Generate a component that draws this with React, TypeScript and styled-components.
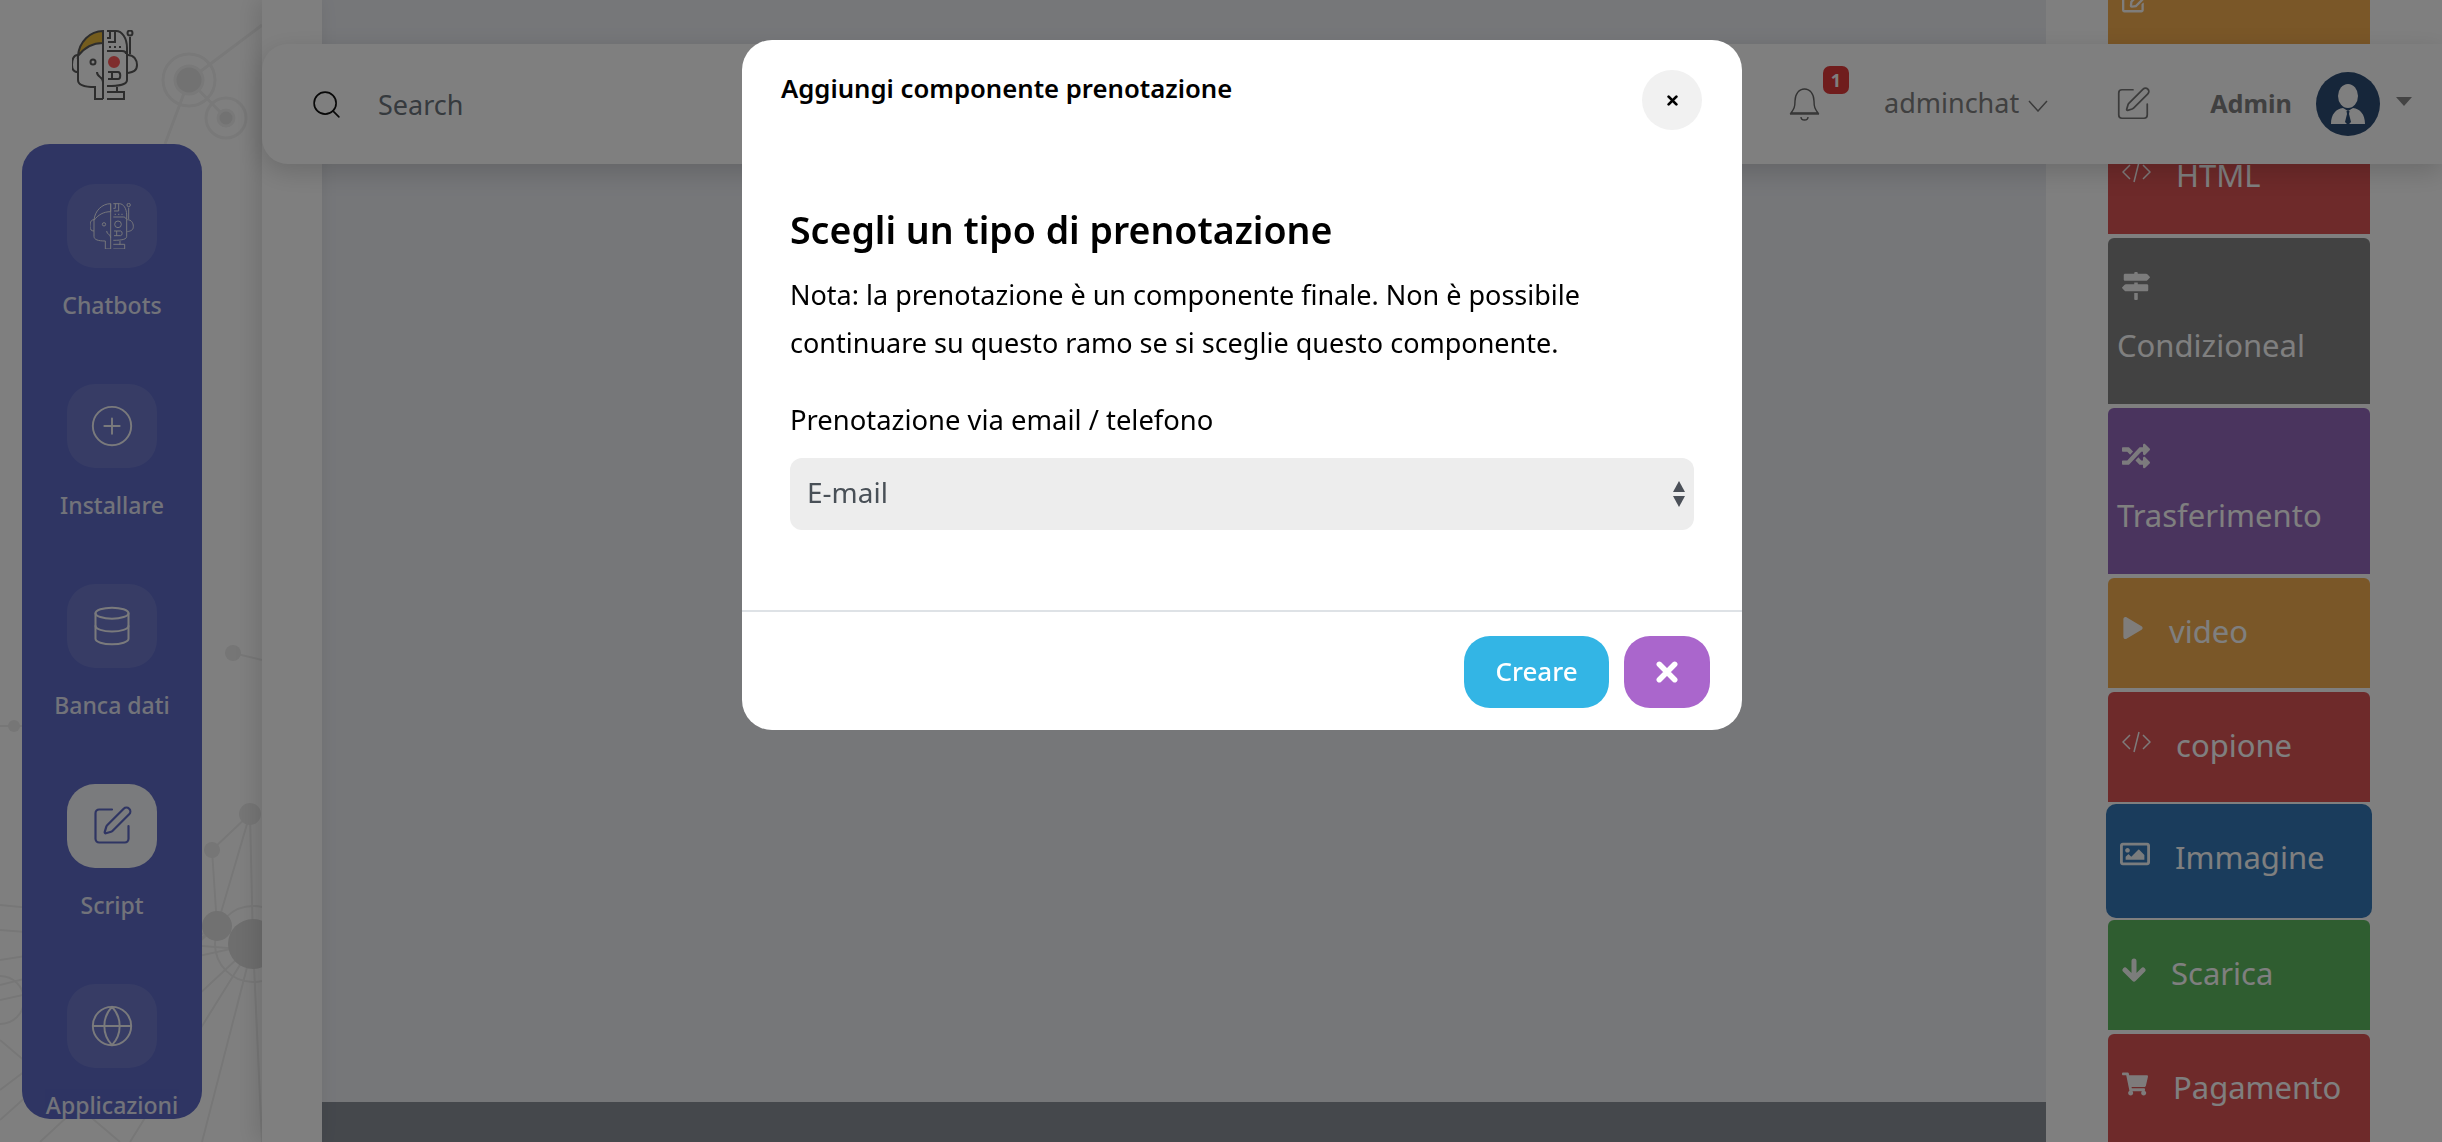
import React from 'react';
import styled, {createGlobalStyle} from 'styled-components';
import {Search, CirclePlus, Database, SquarePen, Globe} from 'lucide-react';
import {FaMapSigns, FaPlay, FaRandom, FaRegImage, FaShoppingCart, FaRegEdit} from 'react-icons/fa';

const GlobalStyle = createGlobalStyle`
  html, body {
    margin: 0;
    padding: 0;
    height: 100%;
    background: #fff;
    font-family: "Noto Sans", "Open Sans", sans-serif;
  }
  * {
    box-sizing: border-box;
  }
`

const BotLogo = ({mono, width}: {mono?: boolean; width: number}) => {
    const line = mono ? '#f4f4f8' : '#5a5a5a'
    return (
        <svg width={width} viewBox="0 0 66 70" fill="none" stroke={line} strokeWidth={mono ? 1.4 : 2}>
            {!mono && <path d="M6 26C7 12 18 1 31 1V13C20 13 12 18 6 26Z" fill="#e8b83a" />}
            {mono && <path d="M6 26C7 12 18 1 31 1V13C20 13 12 18 6 26Z" />}
            <path d="M6 26V50C6 55 12 57 23 57V69H31M31 1V69" />
            <circle cx="21" cy="32" r="2.5" />
            <path d="M25 42C25 48 31 46 31 52" />
            <path d="M6 25C1 25 0 30 0 35C0 40 2 42 6 42" />
            <path d="M35 1H44C50 1 55 8 55 18V50C55 54 50 56 35 56" />
            <path d="M38 1V8H35M43 1V12H36" />
            <path d="M37 17H39M42 17H44M47 17H49" />
            <path d="M35 21H50C52 21 54 22 54 24" />
            <circle cx="42" cy="32" r="5" fill={mono ? 'none' : '#ff5a5a'} stroke={mono ? line : '#ff5a5a'} />
            <path d="M36 42H46C49 42 49 49 46 49H36M40 42V49" />
            <path d="M45 57V62H35M35 69H52V62H44" />
            <circle cx="58" cy="3" r="2.5" />
            <path d="M58 7V24" />
            <path d="M56 25C62 25 65 30 65 35C65 41 61 42 56 43" />
        </svg>
    )
}

const NetworkArt = () => (
    <NetworkSvg viewBox="0 0 262 1142" fill="none" stroke="#f2f2f2" strokeWidth={3}>
        <path d="M262 25L189 80L165 144M189 80L226 118" />
        <circle cx="189" cy="80" r="26" />
        <circle cx="189" cy="80" r="14" fill="#e4e4e4" />
        <circle cx="226" cy="118" r="20" />
        <circle cx="226" cy="118" r="8" fill="#e4e4e4" />
        <g stroke="#efefef" strokeWidth={2}>
            <path d="M250 814L217 926L212 850L250 814M250 814L253 944M217 926L253 944M0 905L217 926L0 960M0 1000L253 944L130 1142M253 944L262 1142M0 1090L217 926M0 1040L120 1142M233 653L262 660M0 726L22 726" />
            <path d="M0 930L253 950M0 985L217 930M40 1142L253 944M0 1120L217 926M202 1142L253 944" />
            <circle cx="253" cy="944" r="38" />
            <circle cx="0" cy="1000" r="24" />
        </g>
        <g fill="#ececec" stroke="none">
            <circle cx="217" cy="926" r="15" fill="#e2e2e2" />
            <circle cx="253" cy="944" r="25" fill="#dcdcdc" />
            <circle cx="250" cy="814" r="11" />
            <circle cx="212" cy="850" r="8" />
            <circle cx="233" cy="653" r="8" />
            <circle cx="14" cy="726" r="6" />
        </g>
    </NetworkSvg>
)

const CodeIcon = () => (
    <svg width="29" height="22" viewBox="0 0 29 22" fill="none" stroke="currentColor" strokeWidth={1.5}>
        <path d="M8 4L1 11L8 18M21 4L28 11L21 18M17 1L12 21" />
    </svg>
)

const DownIcon = () => (
    <svg width="24" height="24" viewBox="0 0 24 24" fill="none" stroke="currentColor" strokeWidth={5} strokeLinecap="round" strokeLinejoin="round">
        <path d="M12 3V20M3 12L12 21L21 12" />
    </svg>
)

const TimesIcon = ({size, weight}: {size: number; weight: number}) => (
    <svg width={size} height={size} viewBox="0 0 20 20" fill="none" stroke="currentColor" strokeWidth={weight} strokeLinecap="round">
        <path d="M3 3L17 17M17 3L3 17" />
    </svg>
)

const ChevronIcon = () => (
    <svg width="20" height="12" viewBox="0 0 20 12" fill="none" stroke="currentColor" strokeWidth={1.5}>
        <path d="M1 1L10 11L19 1" />
    </svg>
)

const BellIcon = () => (
    <svg width="31" height="33" viewBox="0 0 31 33" fill="none" stroke="currentColor" strokeWidth={1.4}>
        <path d="M2 25C5 21 6 19 6 13C6 6 10 1 15.5 1C21 1 25 6 25 13C25 19 26 21 29 25Z" />
        <path d="M1 26H30" />
        <path d="M12 29C12 33 19 33 19 29" />
    </svg>
)

const AvatarIcon = () => (
    <svg width="64" height="64" viewBox="0 0 64 64">
        <circle cx="32" cy="32" r="32" fill="#2c4c74" />
        <ellipse cx="32" cy="24" rx="10" ry="12" fill="#fff" />
        <path d="M15 52C15 42 20 37 27 36L32 39L37 36C44 37 49 42 49 52Z" fill="#fff" />
        <path d="M30.5 39H33.5L33 42L35 50L32 53L29 50L31 42Z" fill="#2c4c74" />
    </svg>
)

export default function App() {
    const navItems = [
        {label: 'Chatbots', icon: <BotLogo mono width={44} />},
        {label: 'Installare', icon: <CirclePlus size={46} strokeWidth={1} />},
        {label: 'Banca dati', icon: <Database size={44} strokeWidth={1.1} />},
        {label: 'Script', icon: <SquarePen size={44} strokeWidth={1.2} />, active: true},
        {label: 'Applicazioni', icon: <Globe size={46} strokeWidth={1} />},
    ]
    const blocks = [
        {color: '#f4ae50', height: 166, tall: true, icon: <FaRegEdit size={28} />},
        {color: '#dc5454', height: 112, label: 'HTML', icon: <CodeIcon />},
        {color: '#848484', height: 166, tall: true, label: 'Condizioneal', icon: <FaMapSigns size={28} />},
        {color: '#9468bc', height: 166, tall: true, label: 'Trasferimento', icon: <FaRandom size={28} />},
        {color: '#f4ae50', height: 110, label: 'video', icon: <FaPlay size={22} />},
        {color: '#dc5454', height: 110, label: 'copione', icon: <CodeIcon />},
        {color: '#3478b8', height: 110, label: 'Immagine', icon: <FaRegImage size={30} />, raised: true},
        {color: '#5eba60', height: 110, label: 'Scarica', icon: <DownIcon />},
        {color: '#dc5454', height: 110, label: 'Pagamento', icon: <FaShoppingCart size={26} />},
    ]

    return (
        <Page>
            <GlobalStyle />
            <Rail>
                <NetworkArt />
                <LogoWrap>
                    <BotLogo width={66} />
                </LogoWrap>
                <Sidebar>
                    {navItems.map(item => (
                        <NavItem key={item.label}>
                            <NavIcon $active={item.active}>{item.icon}</NavIcon>
                            <NavLabel>{item.label}</NavLabel>
                        </NavItem>
                    ))}
                </Sidebar>
            </Rail>
            <Strip />
            <Canvas>
                <CanvasBody />
                <CanvasFooter />
            </Canvas>
            <Palette>
                {blocks.map((block, index) => (
                    <Block key={index} $color={block.color} $height={block.height} $tall={block.tall} $raised={block.raised}>
                        <BlockIcon $tall={block.tall}>{block.icon}</BlockIcon>
                        {block.label && <BlockLabel>{block.label}</BlockLabel>}
                    </Block>
                ))}
            </Palette>

            <TopBar>
                <SearchIcon><Search size={33} strokeWidth={1.2} /></SearchIcon>
                <SearchText>Search</SearchText>
                <BellWrap>
                    <BellIcon />
                    <Badge>1</Badge>
                </BellWrap>
                <UserName>adminchat</UserName>
                <Chevron><ChevronIcon /></Chevron>
                <EditIcon><SquarePen size={38} strokeWidth={1.1} /></EditIcon>
                <AdminName>Admin</AdminName>
                <AvatarIcon />
                <Caret />
            </TopBar>

            <Backdrop>
                <Modal>
                    <ModalHeader>
                        <ModalTitle>Aggiungi componente prenotazione</ModalTitle>
                        <CloseButton><TimesIcon size={11} weight={5} /></CloseButton>
                    </ModalHeader>
                    <ModalBody>
                        <Heading>Scegli un tipo di prenotazione</Heading>
                        <Note>Nota: la prenotazione è un componente finale. Non è possibile continuare su questo ramo se si sceglie questo componente.</Note>
                        <FieldLabel>Prenotazione via email / telefono</FieldLabel>
                        <SelectWrap>
                            <Select defaultValue="E-mail">
                                <option>E-mail</option>
                                <option>Telefono</option>
                            </Select>
                            <SelectArrows width="14" height="28" viewBox="0 0 14 28" fill="#4b5058">
                                <path d="M7 1L13 12H1Z" />
                                <path d="M7 27L13 16H1Z" />
                            </SelectArrows>
                        </SelectWrap>
                    </ModalBody>
                    <ModalFooter>
                        <CreateButton>Creare</CreateButton>
                        <DismissButton><TimesIcon size={22} weight={5} /></DismissButton>
                    </ModalFooter>
                </Modal>
            </Backdrop>
        </Page>
    );
}

const Page = styled.div`
  position: relative;
  display: flex;
  width: 100%;
  height: 100vh;
  overflow: hidden;
  background: #fff;
`
const Rail = styled.aside`
  position: relative;
  flex: 0 0 262px;
  padding-top: 30px;
`
const NetworkSvg = styled.svg`
  position: absolute;
  top: 0;
  left: 0;
  width: 262px;
  height: 1142px;
`
const LogoWrap = styled.div`
  position: relative;
  height: 70px;
  margin-left: 72px;
  display: flex;
`
const Sidebar = styled.nav`
  position: relative;
  width: 180px;
  height: 975px;
  margin: 44px 0 0 22px;
  padding-top: 40px;
  border-radius: 28px;
  background: #5e6ac6;
  overflow: hidden;
  display: flex;
  flex-direction: column;
  align-items: center;
  gap: 62px;
`
const NavItem = styled.div`
  display: flex;
  flex-direction: column;
  align-items: center;
  flex-shrink: 0;
`
const NavIcon = styled.div<{$active?: boolean}>`
  width: 90px;
  height: 84px;
  border-radius: 28px;
  display: flex;
  align-items: center;
  justify-content: center;
  background: ${props => props.$active ? '#f4f6fa' : 'rgba(255, 255, 255, 0.1)'};
  color: ${props => props.$active ? '#5e6ac6' : '#f4f4f8'};
`
const NavLabel = styled.div`
  margin-top: 20px;
  font-size: 23px;
  line-height: 34px;
  font-weight: 500;
  color: #f4f5fa;
  opacity: 0.9;
  white-space: nowrap;
`
const Strip = styled.div`
  position: relative;
  flex: 0 0 60px;
  background: #fff;
  box-shadow: -6px 0 22px rgba(0, 0, 0, 0.12);
`
const Canvas = styled.main`
  flex: 0 0 1724px;
  display: flex;
  flex-direction: column;
`
const CanvasBody = styled.div`
  flex: 1;
  background: #eceef3;
`
const CanvasFooter = styled.div`
  flex: 0 0 40px;
  background: #8a9099;
`
const Palette = styled.section`
  flex: 0 0 396px;
  margin-top: -48px;
  padding-left: 62px;
  display: flex;
  flex-direction: column;
  gap: 4px;
`
const Block = styled.div<{$color: string; $height: number; $tall?: boolean; $raised?: boolean}>`
  flex-shrink: 0;
  width: ${props => props.$raised ? 266 : 262}px;
  height: ${props => props.$raised ? props.$height + 4 : props.$height}px;
  margin: ${props => props.$raised ? '-2px 0 -2px -2px' : '0'};
  border-radius: ${props => props.$raised ? '10px' : '6px 6px 0 0'};
  background: ${props => props.$color};
  color: #fff;
  display: flex;
  flex-direction: ${props => props.$tall ? 'column' : 'row'};
  align-items: flex-start;
  gap: ${props => props.$tall ? '30px' : '25px'};
  padding: ${props => props.$tall ? '34px 0 0 9px' : '38px 0 0 14px'};
`
const BlockIcon = styled.span<{$tall?: boolean}>`
  display: flex;
  align-items: center;
  height: ${props => props.$tall ? '28px' : '24px'};
  margin-left: ${props => props.$tall ? '5px' : '0'};
  opacity: 0.95;
`
const BlockLabel = styled.span`
  font-size: 31px;
  line-height: 30px;
  font-weight: 400;
  white-space: nowrap;
`
const TopBar = styled.header`
  position: absolute;
  top: 44px;
  left: 262px;
  right: 0;
  height: 120px;
  padding: 0 30px 0 48px;
  border-radius: 26px 0 0 26px;
  background: #fff;
  box-shadow: 0 8px 26px rgba(0, 0, 0, 0.16);
  display: flex;
  align-items: center;
`
const SearchIcon = styled.span`
  display: flex;
  color: #111;
`
const SearchText = styled.span`
  margin-left: 35px;
  font-size: 27px;
  color: #6c757d;
`
const BellWrap = styled.span`
  position: relative;
  display: flex;
  margin-left: auto;
  color: #666;
`
const Badge = styled.span`
  position: absolute;
  top: -22px;
  left: 34px;
  width: 26px;
  height: 28px;
  border-radius: 7px;
  background: #e03a3a;
  color: #fff;
  font-size: 18px;
  font-weight: 700;
  display: flex;
  align-items: center;
  justify-content: center;
`
const UserName = styled.span`
  margin: -4px 0 0 64px;
  font-size: 27px;
  color: #808080;
`
const Chevron = styled.span`
  display: flex;
  margin: 4px 0 0 9px;
  color: #777;
`
const EditIcon = styled.span`
  display: flex;
  margin-left: 66px;
  color: #777;
`
const AdminName = styled.span`
  margin: -2px 24px 0 58px;
  font-size: 25.2px;
  font-weight: 700;
  color: #808080;
`
const Caret = styled.span`
  margin: -6px 0 0 16px;
  border-left: 8px solid transparent;
  border-right: 8px solid transparent;
  border-top: 9px solid #888;
`
const Backdrop = styled.div`
  position: fixed;
  inset: 0;
  padding: 40px 0 0 742px;
  background: rgba(0, 0, 0, 0.5);
`
const Modal = styled.div`
  width: 1000px;
  height: 690px;
  border-radius: 30px;
  background: #fff;
  display: flex;
  flex-direction: column;
`
const ModalHeader = styled.div`
  height: 90px;
  padding: 30px 40px 0 39px;
  display: flex;
  justify-content: space-between;
  align-items: flex-start;
`
const ModalTitle = styled.h5`
  margin: 0;
  font-size: 25.7px;
  line-height: 38px;
  font-weight: 600;
  color: #000;
`
const CloseButton = styled.button`
  width: 60px;
  height: 60px;
  border: 0;
  border-radius: 50%;
  background: #f1f1f1;
  color: #000;
  display: flex;
  align-items: center;
  justify-content: center;
  padding: 0;
`
const ModalBody = styled.div`
  flex: 1;
  padding: 75px 48px 0;
`
const Heading = styled.h3`
  margin: 0 0 16px;
  font-size: 37.5px;
  line-height: 50px;
  font-weight: 600;
  color: #000;
`
const Note = styled.p`
  margin: 0;
  font-size: 27px;
  line-height: 48px;
  color: #000;
`
const FieldLabel = styled.label`
  display: block;
  margin-top: 33px;
  font-size: 27.4px;
  line-height: 40px;
  color: #000;
`
const SelectWrap = styled.div`
  position: relative;
  margin-top: 18px;
`
const Select = styled.select`
  display: block;
  width: 904px;
  height: 72px;
  padding: 0 17px 5px;
  border: 0;
  border-radius: 12px;
  appearance: none;
  background: #ededed;
  color: #495057;
  font-family: inherit;
  font-size: 28px;
`
const SelectArrows = styled.svg`
  position: absolute;
  top: 22px;
  right: 8px;
`
const ModalFooter = styled.div`
  height: 120px;
  padding: 24px 32px 0 0;
  border-top: 2px solid #dee2e6;
  display: flex;
  justify-content: flex-end;
  gap: 15px;
`
const CreateButton = styled.button`
  width: 145px;
  height: 72px;
  padding: 0 0 3px;
  border: 0;
  border-radius: 26px;
  background: #33b5e5;
  color: #fff;
  font-family: inherit;
  font-size: 26px;
  font-weight: 500;
`
const DismissButton = styled.button`
  width: 86px;
  height: 72px;
  border: 0;
  border-radius: 26px;
  background: #aa66cc;
  color: #fff;
  display: flex;
  align-items: center;
  justify-content: center;
  padding: 0;
`
